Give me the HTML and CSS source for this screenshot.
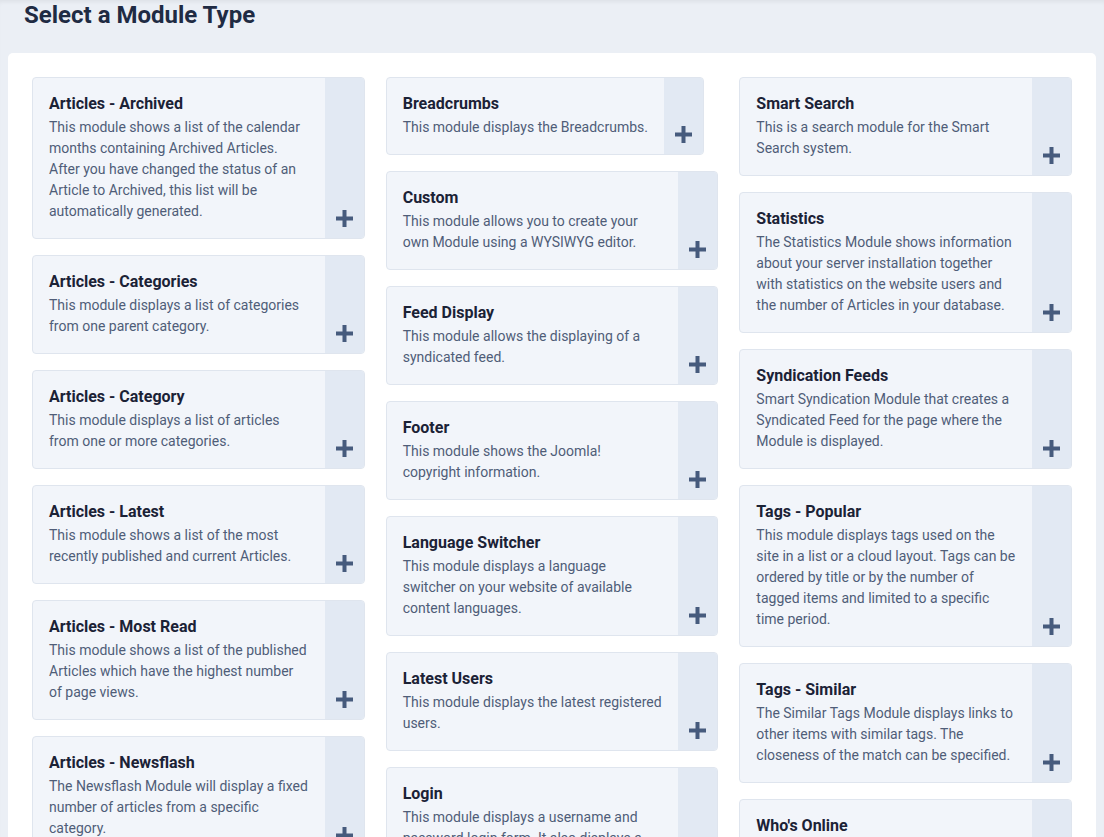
FILE: index.html
```html
<!DOCTYPE html>
<html lang="en">
<head>
<meta charset="UTF-8">
<meta name="viewport" content="width=device-width, initial-scale=1">
<title>Select a Module Type</title>
<link rel="stylesheet" href="styles.css">
</head>
<body>
<h1 class="page-title">Select a Module Type</h1>
<div class="panel">
<div class="module-columns">

<div class="module-col">
<a class="module-card" href="#">
<div class="module-body">
<h3>Articles - Archived</h3>
<p>This module shows a list of the calendar months containing Archived Articles. After you have changed the status of an Article to Archived, this list will be automatically generated.</p>
</div>
<span class="module-add"><svg width="17" height="17" viewBox="0 0 17 17"><rect x="6.5" y="0" width="4" height="17"/><rect x="0" y="6.5" width="17" height="4"/></svg></span>
</a>
<a class="module-card" href="#">
<div class="module-body">
<h3>Articles - Categories</h3>
<p>This module displays a list of categories from one parent category.</p>
</div>
<span class="module-add"><svg width="17" height="17" viewBox="0 0 17 17"><rect x="6.5" y="0" width="4" height="17"/><rect x="0" y="6.5" width="17" height="4"/></svg></span>
</a>
<a class="module-card" href="#">
<div class="module-body">
<h3>Articles - Category</h3>
<p>This module displays a list of articles from one or more categories.</p>
</div>
<span class="module-add"><svg width="17" height="17" viewBox="0 0 17 17"><rect x="6.5" y="0" width="4" height="17"/><rect x="0" y="6.5" width="17" height="4"/></svg></span>
</a>
<a class="module-card" href="#">
<div class="module-body">
<h3>Articles - Latest</h3>
<p>This module shows a list of the most recently published and current Articles.</p>
</div>
<span class="module-add"><svg width="17" height="17" viewBox="0 0 17 17"><rect x="6.5" y="0" width="4" height="17"/><rect x="0" y="6.5" width="17" height="4"/></svg></span>
</a>
<a class="module-card" href="#">
<div class="module-body">
<h3>Articles - Most Read</h3>
<p>This module shows a list of the published Articles which have the highest number of page views.</p>
</div>
<span class="module-add"><svg width="17" height="17" viewBox="0 0 17 17"><rect x="6.5" y="0" width="4" height="17"/><rect x="0" y="6.5" width="17" height="4"/></svg></span>
</a>
<a class="module-card" href="#">
<div class="module-body">
<h3>Articles - Newsflash</h3>
<p>The Newsflash Module will display a fixed number of articles from a specific category.</p>
</div>
<span class="module-add"><svg width="17" height="17" viewBox="0 0 17 17"><rect x="6.5" y="0" width="4" height="17"/><rect x="0" y="6.5" width="17" height="4"/></svg></span>
</a>
<a class="module-card" href="#">
<div class="module-body">
<h3>Articles - Related</h3>
<p>This module displays other Articles that are related to the one currently being viewed. These relations are established by the Meta Keywords.</p>
</div>
<span class="module-add"><svg width="17" height="17" viewBox="0 0 17 17"><rect x="6.5" y="0" width="4" height="17"/><rect x="0" y="6.5" width="17" height="4"/></svg></span>
</a>
</div>

<div class="module-col">
<a class="module-card" href="#">
<div class="module-body">
<h3>Breadcrumbs</h3>
<p>This module displays the Breadcrumbs.</p>
</div>
<span class="module-add"><svg width="17" height="17" viewBox="0 0 17 17"><rect x="6.5" y="0" width="4" height="17"/><rect x="0" y="6.5" width="17" height="4"/></svg></span>
</a>
<a class="module-card" href="#">
<div class="module-body">
<h3>Custom</h3>
<p>This module allows you to create your own Module using a WYSIWYG editor.</p>
</div>
<span class="module-add"><svg width="17" height="17" viewBox="0 0 17 17"><rect x="6.5" y="0" width="4" height="17"/><rect x="0" y="6.5" width="17" height="4"/></svg></span>
</a>
<a class="module-card" href="#">
<div class="module-body">
<h3>Feed Display</h3>
<p>This module allows the displaying of a syndicated feed.</p>
</div>
<span class="module-add"><svg width="17" height="17" viewBox="0 0 17 17"><rect x="6.5" y="0" width="4" height="17"/><rect x="0" y="6.5" width="17" height="4"/></svg></span>
</a>
<a class="module-card" href="#">
<div class="module-body">
<h3>Footer</h3>
<p>This module shows the Joomla! copyright information.</p>
</div>
<span class="module-add"><svg width="17" height="17" viewBox="0 0 17 17"><rect x="6.5" y="0" width="4" height="17"/><rect x="0" y="6.5" width="17" height="4"/></svg></span>
</a>
<a class="module-card" href="#">
<div class="module-body">
<h3>Language Switcher</h3>
<p>This module displays a language switcher on your website of available content languages.</p>
</div>
<span class="module-add"><svg width="17" height="17" viewBox="0 0 17 17"><rect x="6.5" y="0" width="4" height="17"/><rect x="0" y="6.5" width="17" height="4"/></svg></span>
</a>
<a class="module-card" href="#">
<div class="module-body">
<h3>Latest Users</h3>
<p>This module displays the latest registered users.</p>
</div>
<span class="module-add"><svg width="17" height="17" viewBox="0 0 17 17"><rect x="6.5" y="0" width="4" height="17"/><rect x="0" y="6.5" width="17" height="4"/></svg></span>
</a>
<a class="module-card" href="#">
<div class="module-body">
<h3>Login</h3>
<p>This module displays a username and password login form. It also displays a link to retrieve a forgotten password. If user registration is enabled (in Global Configuration), another link will be shown to invite users to self-register.</p>
</div>
<span class="module-add"><svg width="17" height="17" viewBox="0 0 17 17"><rect x="6.5" y="0" width="4" height="17"/><rect x="0" y="6.5" width="17" height="4"/></svg></span>
</a>
</div>

<div class="module-col">
<a class="module-card" href="#">
<div class="module-body">
<h3>Smart Search</h3>
<p>This is a search module for the Smart Search system.</p>
</div>
<span class="module-add"><svg width="17" height="17" viewBox="0 0 17 17"><rect x="6.5" y="0" width="4" height="17"/><rect x="0" y="6.5" width="17" height="4"/></svg></span>
</a>
<a class="module-card" href="#">
<div class="module-body">
<h3>Statistics</h3>
<p>The Statistics Module shows information about your server installation together with statistics on the website users and the number of Articles in your database.</p>
</div>
<span class="module-add"><svg width="17" height="17" viewBox="0 0 17 17"><rect x="6.5" y="0" width="4" height="17"/><rect x="0" y="6.5" width="17" height="4"/></svg></span>
</a>
<a class="module-card" href="#">
<div class="module-body">
<h3>Syndication Feeds</h3>
<p>Smart Syndication Module that creates a Syndicated Feed for the page where the Module is displayed.</p>
</div>
<span class="module-add"><svg width="17" height="17" viewBox="0 0 17 17"><rect x="6.5" y="0" width="4" height="17"/><rect x="0" y="6.5" width="17" height="4"/></svg></span>
</a>
<a class="module-card" href="#">
<div class="module-body">
<h3>Tags - Popular</h3>
<p>This module displays tags used on the site in a list or a cloud layout. Tags can be ordered by title or by the number of tagged items and limited to a specific time period.</p>
</div>
<span class="module-add"><svg width="17" height="17" viewBox="0 0 17 17"><rect x="6.5" y="0" width="4" height="17"/><rect x="0" y="6.5" width="17" height="4"/></svg></span>
</a>
<a class="module-card" href="#">
<div class="module-body">
<h3>Tags - Similar</h3>
<p>The Similar Tags Module displays links to other items with similar tags. The closeness of the match can be specified.</p>
</div>
<span class="module-add"><svg width="17" height="17" viewBox="0 0 17 17"><rect x="6.5" y="0" width="4" height="17"/><rect x="0" y="6.5" width="17" height="4"/></svg></span>
</a>
<a class="module-card" href="#">
<div class="module-body">
<h3>Who's Online</h3>
<p>The Who's Online Module displays the number of Anonymous Users (e.g. Guests) and Registered Users (ones logged-in) that are currently accessing the website.</p>
</div>
<span class="module-add"><svg width="17" height="17" viewBox="0 0 17 17"><rect x="6.5" y="0" width="4" height="17"/><rect x="0" y="6.5" width="17" height="4"/></svg></span>
</a>
</div>

</div>
</div>
</body>
</html>
```

FILE: styles.css
```css
body {
  margin: 0;
  background: #ebeff5;
  font-family: Roboto, 'Liberation Sans', sans-serif;
  box-shadow: inset 0 4px 4px -2px rgba(0, 0, 0, 0.06);
  min-height: 100vh;
}
.page-title {
  margin: 0;
  padding: 0 24px;
  font-size: 24px;
  line-height: 30px;
  font-weight: 700;
  color: #1f2b43;
}
.panel {
  margin: 23px 8px 0;
  padding: 24px;
  background: #ffffff;
  border-radius: 5px;
}
.module-columns {
  display: flex;
  gap: 21px;
}
.module-col {
  flex: 1 1 0;
  min-width: 0;
  display: flex;
  flex-direction: column;
  align-items: flex-start;
  gap: 16px;
}
.module-card {
  display: flex;
  max-width: 100%;
  box-sizing: border-box;
  background: #f2f5fa;
  border: 1px solid #dfe5ee;
  border-radius: 4px;
  overflow: hidden;
  text-decoration: none;
}
.module-body {
  padding: 16px;
  min-width: 0;
}
.module-body h3 {
  margin: 0 0 3px;
  font-size: 16px;
  line-height: 20px;
  font-weight: 700;
  color: #1b2236;
}
.module-body p {
  margin: 0;
  font-size: 14px;
  line-height: 21px;
  color: #4f5d78;
}
.module-add {
  flex: 0 0 39px;
  background: #e2e9f3;
  display: flex;
  justify-content: center;
  align-items: flex-end;
  padding-bottom: 11px;
}
.module-add svg {
  fill: #465b7d;
}
```
